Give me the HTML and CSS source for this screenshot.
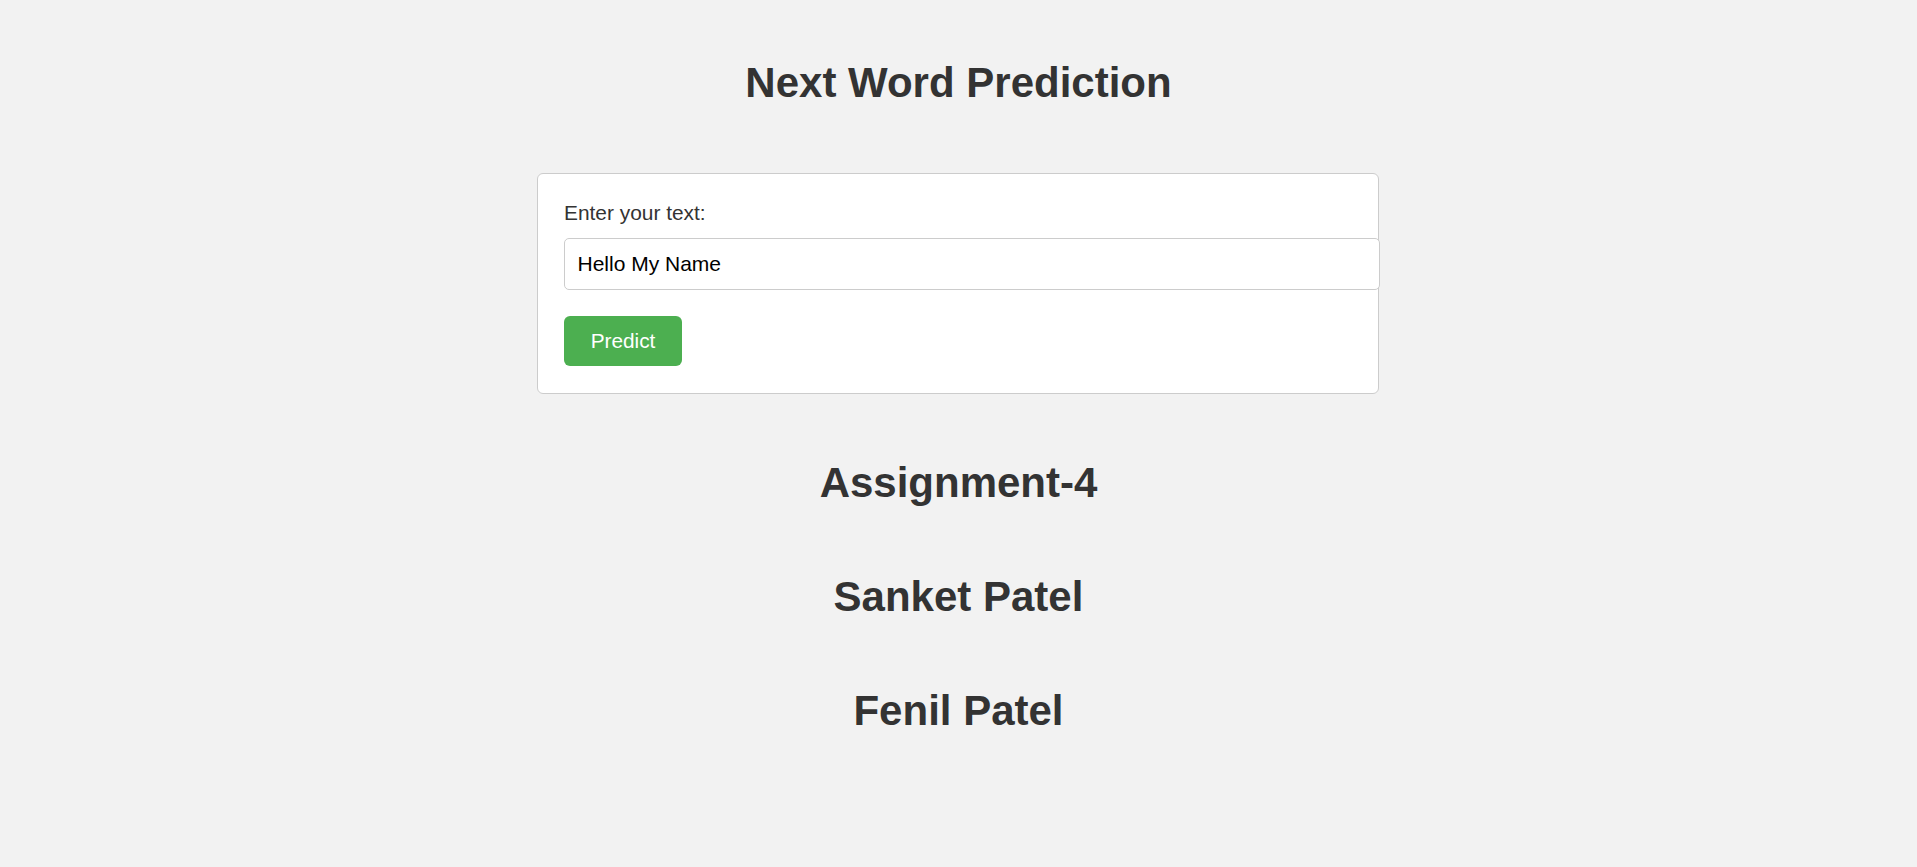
FILE: index.html
```html
<!DOCTYPE html>
<html lang="en">
<head>
<meta charset="utf-8">
<title>Next Word Prediction</title>
<link rel="stylesheet" href="styles.css">
</head>
<body>
<main class="page">
  <h1 class="title">Next Word Prediction</h1>
  <form class="card">
    <label class="label" for="text">Enter your text:</label>
    <input class="input" id="text" type="text" value="Hello My Name">
    <button class="btn" type="button">Predict</button>
  </form>
  <h2 class="heading heading-first">Assignment-4</h2>
  <h2 class="heading">Sanket Patel</h2>
  <h2 class="heading">Fenil Patel</h2>
</main>
</body>
</html>
```

FILE: styles.css
```css
html, body {
  margin: 0;
  padding: 0;
}
body {
  background: #f2f2f2;
  color: #333;
  font-family: "Liberation Sans", Arial, sans-serif;
}
.page {
  display: flex;
  flex-direction: column;
  align-items: center;
  padding-top: 59px;
}
.title {
  margin: 0;
  font-size: 42px;
  line-height: 48px;
  font-weight: bold;
  text-align: center;
}
.card {
  box-sizing: border-box;
  width: 842px;
  margin: 66px 1px 0 0;
  background: #fff;
  border: 1px solid #cccccc;
  border-radius: 6px;
  padding: 27px 25px 27px 26px;
  display: flex;
  flex-direction: column;
  align-items: flex-start;
}
.label {
  display: block;
  font-size: 20.9px;
  line-height: 23px;
  color: #333;
}
.input {
  box-sizing: border-box;
  width: 816px;
  height: 52px;
  margin-top: 14px;
  padding: 0 12.5px;
  border: 1px solid #cccccc;
  border-radius: 5px;
  font-family: "Liberation Sans", Arial, sans-serif;
  font-size: 21px;
  color: #000;
  background: #fff;
  outline: none;
}
.btn {
  width: 118px;
  height: 50px;
  margin-top: 26px;
  border: none;
  border-radius: 6px;
  background: #4caf50;
  color: #fff;
  font-family: "Liberation Sans", Arial, sans-serif;
  font-size: 20.8px;
  padding: 0;
  cursor: pointer;
}
.heading {
  margin: 66px 0 0 0;
  font-size: 42px;
  line-height: 48px;
  font-weight: bold;
  text-align: center;
}
.heading-first {
  margin-top: 65px;
}
```
